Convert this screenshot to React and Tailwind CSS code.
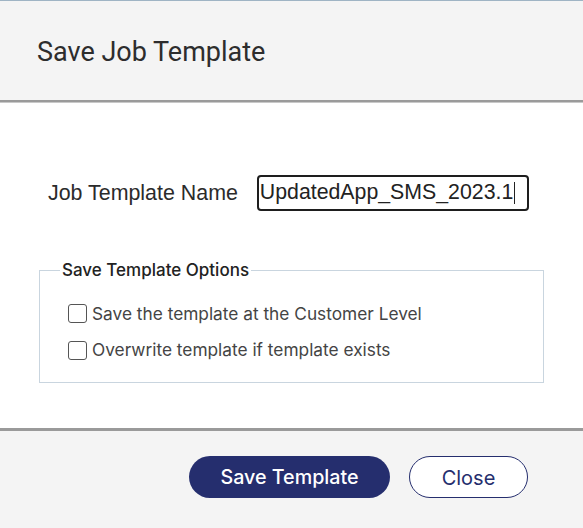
import React from "react";

export default function App() {
  return (
    <div className="w-[583px] h-[528px] flex flex-col bg-white overflow-hidden">
      <div className="h-[1px] bg-[#9fb4c4]" />
      <div className="h-[99px] bg-[#f4f4f4] flex items-center pl-[37px] pt-[4px]">
        <h1 className="text-[27px] text-[#2d2d2d] font-['Roboto',sans-serif] font-normal">
          Save Job Template
        </h1>
      </div>
      <div className="h-[3px] bg-[#9a9a9a] border-b border-[#c8c8c8]" />
      <div className="h-[325px] bg-white flex flex-col">
        <div className="flex items-center pt-[72px]">
          <label className="ml-[48px] text-[21.4px] text-[#2b2b2b] font-['Liberation_Sans',Arial,sans-serif]">
            Job Template Name
          </label>
          <div className="ml-[19px] w-[272px] h-[36px] border-2 border-[#1e1e1e] rounded-[4px] flex items-center pl-[1px]">
            <span className="text-[21.3px] text-[#222] font-['Liberation_Sans',Arial,sans-serif] leading-none">
              UpdatedApp_SMS_2023.1
            </span>
            <span className="w-[1px] h-[22px] bg-[#222] ml-[1px]" />
          </div>
        </div>
        <fieldset className="mt-[47px] ml-[39px] w-[505px] h-[125px] border border-[#c9d5df] px-[28px] pt-[0px] pb-[8px] font-['Inter',sans-serif]">
          <legend className="ml-[-8px] px-[2px] text-[17px] font-medium text-[#222]">
            Save Template Options
          </legend>
          <div className="flex flex-col gap-[11px] mt-[17px]">
            <label className="flex items-center gap-[5px] text-[17.3px] text-[#444]">
              <span className="w-[19px] h-[19px] border-[1.5px] border-[#555] rounded-[3px] bg-white" />
              Save the template at the Customer Level
            </label>
            <label className="flex items-center gap-[5px] text-[17.3px] text-[#444]">
              <span className="w-[19px] h-[19px] border-[1.5px] border-[#555] rounded-[3px] bg-white" />
              Overwrite template if template exists
            </label>
          </div>
        </fieldset>
      </div>
      <div className="h-[3px] bg-[#9a9a9a]" />
      <div className="flex-1 bg-[#f4f4f4] flex items-start justify-end pr-[55px] pt-[25px] gap-[19px] font-['Inter',sans-serif]">
        <button className="w-[201px] h-[42px] pt-[2px] rounded-full bg-[#252e6e] text-white text-[19.7px] font-medium">
          Save Template
        </button>
        <button className="w-[119px] h-[42px] pt-[2px] rounded-full bg-white border border-[#252e6e] text-[#252e6e] text-[20px]">
          Close
        </button>
      </div>
    </div>
  );
}
